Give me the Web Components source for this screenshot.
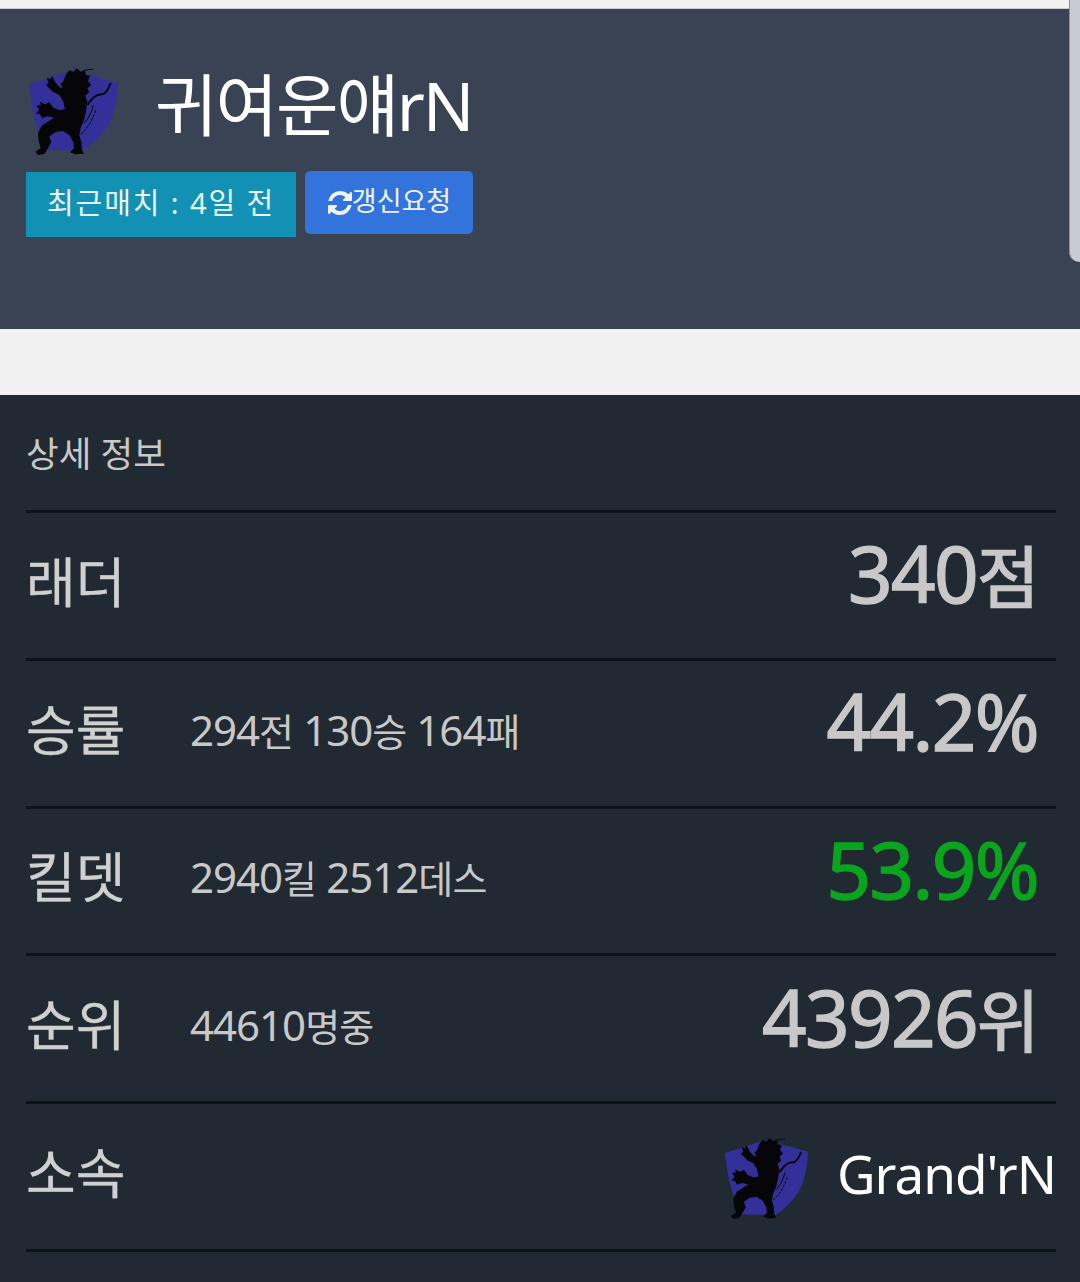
<!DOCTYPE html>
<html lang="ko">
<head>
<meta charset="utf-8">
<title>전적</title>
<style>
html,body{margin:0;padding:0;background:#f1f1f1;}
body{width:1080px;height:1282px;overflow:hidden;font-family:"Noto Sans","Noto Sans CJK KR",sans-serif;}
</style>
</head>
<body>
<player-hero name="귀여운얘rN" last-match="최근매치 : 4일 전" refresh="갱신요청"></player-hero>
<stat-panel heading="상세 정보">
	<stat-row label="래더" value="340점"></stat-row>
	<stat-row label="승률" detail="294전 130승 164패" value="44.2%"></stat-row>
	<stat-row label="킬뎃" detail="2940킬 2512데스" value="53.9%" tone="good"></stat-row>
	<stat-row label="순위" detail="44610명중" value="43926위"></stat-row>
	<guild-row label="소속" guild="Grand'rN"></guild-row>
</stat-panel>
<script>
// the hangul in the reference is set smaller than the digits next to it
function fillMixed(el, text){
	text.split(/([가-힣]+)/).forEach(part => {
		if(!part) return;
		if(/[가-힣]/.test(part)){
			const s=document.createElement('span');
			s.className='ko';
			s.textContent=part;
			el.appendChild(s);
		}else{
			el.appendChild(document.createTextNode(part));
		}
	});
}

class guildMark extends HTMLElement{
	constructor(){
		super();
		this.attachShadow({mode:'open'}).innerHTML=`
		<style>
			:host{display:block;width:var(--mark-size,90px);height:var(--mark-size,90px);flex:none;}
			svg{display:block;width:100%;height:100%;}
		</style>
		<svg viewBox="54 33 270 270" aria-hidden="true">
			<path fill="#33309a" d="M57 88 L190 45 L324 84 C322 130 315 170 300 200 C280 240 250 265 219 287 L110 285 C85 240 65 170 57 88Z"/>
			<path fill="#060608" d="M168 58 L178 46 L190 50 L200 40 L212 50 L224 44 L228 60 L240 62 L234 78 L244 90 L232 100 L238 112 L226 122 L232 140 L228 170 L222 195 L212 218 L208 240 L214 262 L216 285 L222 296 L196 298 L180 292 L192 280 L190 262 L178 240 L158 228 L135 232 L118 245 L124 262 L112 282 L104 296 L84 300 L76 290 L92 280 L86 258 L84 235 L95 212 L120 196 L132 188 L112 184 L96 190 L90 178 L78 176 L88 164 L80 152 L92 150 L90 140 L104 148 L118 142 L130 158 L150 166 L165 162 L160 140 L148 120 L130 112 L118 100 L108 90 L116 84 L110 68 L122 72 L126 62 L136 82 L148 96 L158 100 L152 88 L160 78 Z"/>
			<path fill="none" stroke="#060608" stroke-width="3" d="M224 46 L250 42"/>
			<path fill="none" stroke="#060608" stroke-width="6" d="M232 150 C245 130 262 115 278 118 C292 112 295 100 302 84"/>
			<path fill="none" stroke="#060608" stroke-width="3" d="M222 205 C236 190 246 170 250 150"/>
			<path fill="none" stroke="#060608" stroke-width="3" stroke-dasharray="9 4" d="M212 238 C230 225 245 200 258 165"/>
		</svg>`;
	}
}

class playerHero extends HTMLElement{
	constructor(){
		super();
		this.attachShadow({mode:'open'}).innerHTML=`
		<style>
			:host{display:block;margin-top:8px;height:321px;box-sizing:border-box;background:#3a4354;border-top:1px solid #c9ccd1;padding:57px 0 0 26px;position:relative;color:#fff;}
			.title{display:flex;align-items:center;height:90px;--mark-size:90px;padding-left:2px;}
			h1{margin:0 0 12px 37px;font-weight:400;font-size:68px;line-height:80px;letter-spacing:-2.1px;}
			.actions{display:flex;align-items:flex-start;gap:9px;margin-top:16px;}
			.age{background:#1291b5;width:270px;height:65px;box-sizing:border-box;padding-bottom:7px;display:flex;align-items:center;justify-content:center;font-size:29px;letter-spacing:1.9px;color:#eaf6fa;}
			button{border:0;background:#3273dc;color:#eef3fb;width:168px;height:63px;box-sizing:border-box;margin-top:-1px;border-radius:5px;display:flex;align-items:center;justify-content:center;font:400 27px "Noto Sans","Noto Sans CJK KR",sans-serif;padding:0 0 6px 1px;}
			button svg{width:24px;height:24px;fill:currentColor;margin-top:6px;}
			.thumb{position:absolute;right:0;top:-9px;width:10px;height:262px;background:#c8cbd2;border-left:1px solid #8a8f99;border-bottom-left-radius:10px;}
		</style>
		<div class="title"><guild-mark></guild-mark><h1></h1></div>
		<div class="actions">
			<div class="age"></div>
			<button><svg viewBox="0 0 1536 1536"><path d="M1511 928q0 5-1 7-64 268-268 434.5t-478 166.5q-146 0-282.5-55t-243.5-157l-129 129q-19 19-45 19t-45-19-19-45v-448q0-26 19-45t45-19h448q26 0 45 19t19 45-19 45l-137 137q71 66 161 102t187 36q134 0 250-65t186-179q11-17 53-117 8-23 30-23h192q13 0 22.5 9.5t9.5 22.5zm25-800v448q0 26-19 45t-45 19h-448q-26 0-45-19t-19-45 19-45l138-138q-148-137-349-137-134 0-250 65t-186 179q-11 17-53 117-8 23-30 23h-199q-13 0-22.5-9.5t-9.5-22.5v-7q65-268 270-434.5t480-166.5q146 0 284 55.5t245 156.5l130-129q19-19 45-19t45 19 19 45z"/></svg><span></span></button>
		</div>
		<div class="thumb"></div>`;
	}
	connectedCallback(){
		this.shadowRoot.querySelector('h1').textContent=this.getAttribute('name');
		this.shadowRoot.querySelector('.age').textContent=this.getAttribute('last-match');
		this.shadowRoot.querySelector('button span').textContent=this.getAttribute('refresh');
	}
}

class statPanel extends HTMLElement{
	constructor(){
		super();
		this.attachShadow({mode:'open'}).innerHTML=`
		<style>
			:host{display:block;margin-top:66px;height:887px;box-sizing:border-box;background:#212932;padding:0 24px 0 26px;color:#c8c8c8;}
			.head{height:118px;box-sizing:border-box;padding-top:33px;font-size:35.5px;line-height:50px;font-weight:400;border-bottom:3px solid #0e1116;}
		</style>
		<div class="head"></div>
		<slot></slot>`;
	}
	connectedCallback(){
		this.shadowRoot.querySelector('.head').textContent=this.getAttribute('heading');
	}
}

const rowStyle=`
	:host{display:flex;align-items:center;height:147.8px;box-sizing:border-box;padding-bottom:12px;border-bottom:3px solid #0e1116;color:#c8c8c8;}
	.label{width:165px;flex:none;font-size:54px;font-weight:400;color:#d0d0d0;-webkit-text-stroke:.3px #d0d0d0;}
`;

class statRow extends HTMLElement{
	constructor(){
		super();
		this.attachShadow({mode:'open'}).innerHTML=`
		<style>${rowStyle}
			.detail{font-size:42px;font-weight:400;letter-spacing:-1px;padding-top:4px;margin-left:-1px;}
			.detail .ko{font-size:38px;letter-spacing:-.8px;}
			.value{margin-left:auto;padding:0 18px 12px 0;font-size:78px;font-weight:400;letter-spacing:-1.6px;-webkit-text-stroke:1.4px currentColor;}
			.value .ko{font-size:68px;-webkit-text-stroke:1.4px currentColor;}
			:host([tone=good]) .value{color:#0aa51e;}
		</style>
		<span class="label"></span><span class="detail"></span><span class="value"></span>`;
	}
	connectedCallback(){
		this.shadowRoot.querySelector('.label').textContent=this.getAttribute('label');
		fillMixed(this.shadowRoot.querySelector('.detail'),this.getAttribute('detail')||'');
		fillMixed(this.shadowRoot.querySelector('.value'),this.getAttribute('value'));
	}
}

class guildRow extends HTMLElement{
	constructor(){
		super();
		this.attachShadow({mode:'open'}).innerHTML=`
		<style>${rowStyle}
			.guild{margin-left:auto;display:flex;align-items:center;gap:29px;--mark-size:84px;}
			guild-mark{margin-top:14px;}
			.name{font-size:53px;font-weight:400;color:#fff;letter-spacing:-1px;padding-top:6px;}
		</style>
		<span class="label"></span>
		<div class="guild"><guild-mark></guild-mark><span class="name"></span></div>`;
	}
	connectedCallback(){
		this.shadowRoot.querySelector('.label').textContent=this.getAttribute('label');
		this.shadowRoot.querySelector('.name').textContent=this.getAttribute('guild');
	}
}

customElements.define('guild-mark',guildMark);
customElements.define('player-hero',playerHero);
customElements.define('stat-panel',statPanel);
customElements.define('stat-row',statRow);
customElements.define('guild-row',guildRow);
</script>
</body>
</html>
